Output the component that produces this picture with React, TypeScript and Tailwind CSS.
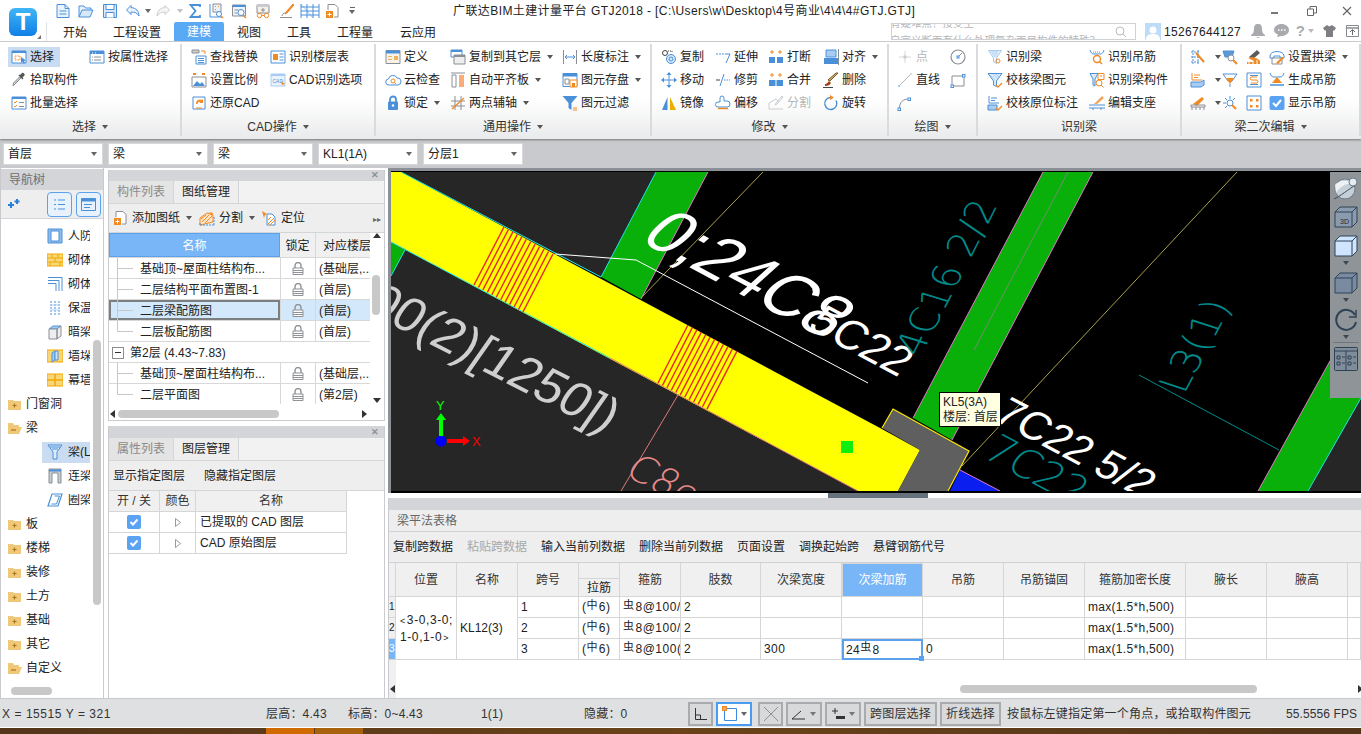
import React from "react";

const B = "#4a90d9", O = "#f08a24", G = "#8a8f96", L = "#a9cdf2", K = "#444";

const S = ({ s = 16, children }: { s?: number; children: React.ReactNode }) => (
  <svg width={s} height={s} viewBox="0 0 16 16" fill="none" strokeWidth="1" className="shrink-0">{children}</svg>
);
const Caret = ({ c = "border-t-[#555]" }: { c?: string }) => (
  <span className={`inline-block w-0 h-0 border-x-[3px] border-t-[4px] border-x-transparent ${c}`} />
);

const icons: Record<string, React.ReactNode> = {
  doc: <S><path d="M2 1.5h8l4 4v9H2z" fill="#eaf3fc" stroke={B} /><path d="M10 1.5v4h4M4.5 8h7M4.5 11h7" stroke={B} /></S>,
  open: <S><path d="M1 14V3h5l1.5 2H13v2" stroke={B} fill="#eaf3fc" /><path d="M1 14l3-7h11l-3 7z" stroke={B} fill="#d6e8fa" /></S>,
  save: <S><path d="M1.5 1.5h13v13h-13z" fill="#d6e8fa" stroke={B} /><path d="M4 1.5h8v5H4zM4 14.5v-5h8v5" stroke={B} fill="#fff" /></S>,
  undo: <S><path d="M6 2.5L1.5 7 6 11.5V9c4 0 6 1 8 4 0-5-3-8-8-8.5z" fill="#eaf3fc" stroke={B} /></S>,
  redo: <S><path d="M10 2.5L14.5 7 10 11.5V9c-4 0-6 1-8 4 0-5 3-8 8-8.5z" fill="#f6f6f6" stroke="#c9ccd0" /></S>,
  sum: <svg width="12" height="16" viewBox="0 0 12 16" fill="none" className="shrink-0"><path d="M11 4V2H1.5L6.5 8 1.5 14H11v-2" stroke={B} strokeWidth="1.8" /></svg>,
  qa1: <S><path d="M2 1v13h12" stroke={B} /><path d="M5 1h8v8H5z" stroke={G} fill="#eef3f8" /><path d="M7 3h1v1H7zM10 3h1v1h-1zM7 6h1v1H7z" fill={O} /><circle cx="11" cy="11" r="2.5" stroke={B} fill="#fff" /><path d="M13 13l2 2" stroke={O} strokeWidth="1.5" /></S>,
  qa2: <S><path d="M1.5 2h13v11h-13z" stroke={G} fill="#eef3f8" /><path d="M1.5 2h13v2h-13z" fill={B} /><path d="M3.5 7h4M3.5 10h3" stroke={G} /><circle cx="10" cy="9.5" r="3" stroke={B} fill="#fff" /><path d="M12 12l3 3" stroke={O} strokeWidth="1.5" /></S>,
  qa3: <S><path d="M2 2h12v8H2z" stroke={G} fill="#f5f0e8" /><path d="M2 2h12v2H2z" fill="#c9ccd0" /><path d="M8 5v4M6 7h4" stroke={G} /><circle cx="4.5" cy="12.5" r="2.2" stroke={O} /><circle cx="11.5" cy="12.5" r="2.2" stroke={O} /><path d="M6.7 12.5h2.6" stroke={O} /></S>,
  qa4: <S><path d="M14 1l1 1-7 8-2 1 1-2z" fill={O} stroke={O} /><path d="M1 14.5h12" stroke={G} /><path d="M3 13c0-2 2-3 3-3" stroke={G} /></S>,
  qa5: <svg width="20" height="16" viewBox="0 0 20 16" fill="none" className="shrink-0"><path d="M1 1v14M7 1v14M13 1v14M19 1v14M1 4h18M1 8h18M1 12h18" stroke={B} /><path d="M1 1l6 7M7 8l6 7" stroke={B} strokeWidth=".5" /></svg>,
  qa6: <S><path d="M3 7V1.5h7l3 3V14H9" stroke={G} fill="#fff" /><path d="M1 8h7v7H1z" fill={O} /><path d="M4.5 9.5v4M2.5 11.5h4" stroke="#fff" /></S>,
  sel: <S><path d="M1 2h14v12H1z" fill="#fff" stroke={B} /><path d="M1 2h14v2H1z" fill={B} /><path d="M4 7h5v4H4z" stroke={O} strokeDasharray="1.5 1" /><path d="M10 8l5 3.5-2 .5 1 2-1.5.5-1-2-1.5 1.5z" fill={B} /></S>,
  attr: <S><path d="M1 2h14v12H1z" fill="#fff" stroke={B} /><path d="M1 2h14v3H1z" fill={B} /><path d="M3 4h1M6 4h1" stroke="#fff" /><path d="M5 8h7M5 11h7M3 8h1M3 11h1" stroke={G} /></S>,
  pick: <S><path d="M10 6l-6 6-2 2 .5-3 6-6z" fill="#c9ccd0" stroke={G} /><path d="M9 3l1.5-1.5a1.5 1.5 0 012.5 0 1.5 1.5 0 010 2.5L11.5 5.5l1 1-1 1L7.5 3.5l1-1z" fill="#555" /></S>,
  batch: <S><path d="M1 2h14v12H1z" fill="#fff" stroke={B} /><path d="M1 2h14v2H1z" fill={B} /><path d="M3 7l1 1 2-2M3 11l1 1 2-2" stroke={O} /><path d="M8 7.5h5M8 11.5h5" stroke={G} /></S>,
  find: <S><path d="M1 1h7v3H1z" fill="#c9ccd0" stroke={G} /><path d="M10 2h4v3" stroke={O} /><path d="M5 7h10v8H5z" fill="#fff" stroke={B} /><path d="M7 9.5h6M7 11.5h6M7 13.5h6" stroke={B} /></S>,
  scale: <S><path d="M1 5h14v10H1z" fill="#fff" stroke={G} /><path d="M2 14l4-5 3 3 2-2 3 4z" fill={B} /><path d="M2 2h3M11 2h3" stroke={O} strokeWidth="2" /></S>,
  restore: <S><path d="M2 2h12v12H2z" stroke={B} fill="#fff" /><path d="M5 9a4 4 0 016-4l1-1v4H8l1.5-1.5a2.5 2.5 0 00-3 2.5" fill={O} /><path d="M5 13h6" stroke={O} /></S>,
  floor: <S><path d="M1 2h14v12H1z" stroke={B} fill="#fff" /><path d="M3 5h5v6H3z" fill={O} /><path d="M9.5 5h4M9.5 8h4M9.5 11h4" stroke={B} /></S>,
  cad: <S><path d="M1 2h14v12H1z" stroke={L} fill="#eaf3fc" /><path d="M1 2h14v2H1z" fill={L} /><text x="2.5" y="11" fontSize="5" fontFamily="Liberation Sans" fill={B}>CAD</text><path d="M11 9l4 3-3 1z" fill={O} /></S>,
  def: <S><path d="M1 1.5h14v13H1z" fill="#f7f3ea" stroke={G} /><path d="M1 1.5h14v3H1z" fill={B} /><path d="M3 7h4v1H3zM9 7h4v4H9zM3 10h4v1H3z" fill="#eab35c" /></S>,
  cloud: <svg width="17" height="16" viewBox="0 0 17 16" fill="none" className="shrink-0"><path d="M4 13a3 3 0 01-.5-6 4.5 4.5 0 018.5-1 3.5 3.5 0 011 7z" stroke={B} fill="#fff" /><circle cx="8" cy="9" r="2" stroke={O} /><path d="M9.5 10.5l1.5 1.5" stroke={O} /></svg>,
  lock: <S><path d="M5 7V4.5a3 3 0 016 0V7" stroke={B} strokeWidth="1.8" /><rect x="3" y="6.5" width="10" height="8.5" rx="1" fill={B} /><circle cx="8" cy="10.5" r="1.2" fill="#fff" /></S>,
  copyf: <S><path d="M1 1h11v7H1z" stroke={B} fill="#fff" /><path d="M1 1h11v2H1z" fill={B} /><path d="M4 6h11v9H4z" stroke={G} fill="#eee" /><path d="M4 6h11v2H4z" fill={G} /></S>,
  align: <S><path d="M1 1h14" stroke={G} /><path d="M2 3h4v12H2z" stroke={G} fill="#fff" /><path d="M9 3h5v12H9z" fill="#fbac76" /></S>,
  axis: <S><path d="M5 1v14M11 1v14M1 6h14M1 11h14" stroke={G} /><path d="M2 14L14 3" stroke={O} strokeWidth="1.4" /></S>,
  dim: <S><path d="M1.5 1v14M14.5 1v14" stroke={G} /><path d="M3 8h10M5 6L3 8l2 2M11 6l2 2-2 2" stroke={B} /></S>,
  disk: <S><path d="M1 1.5h14v13H1z" fill="#fff" stroke={B} /><path d="M1 1.5h14v3H1z" fill={B} /><path d="M3 7h4v5H3z" stroke={G} /><path d="M8 8h7v7H8z" fill="#fff" stroke={O} /><path d="M10 11h3v4h-3z" fill={O} /></S>,
  filter: <S><path d="M.5 1h15L9.5 8v7l-3-2V8z" fill={B} /><path d="M11 13h4M11 15h4" stroke={O} /></S>,
  copy: <S><circle cx="4" cy="4" r="2.5" stroke={K} /><circle cx="10" cy="10" r="4.5" stroke={B} fill="#d6e8fa" /><circle cx="10" cy="10" r="2" stroke={B} /><path d="M7 2h4v2" stroke={K} strokeDasharray="1 1" /></S>,
  extend: <S><path d="M1 5h8" stroke={B} strokeDasharray="2 1" /><path d="M10 5h5L11 14" stroke={B} /></S>,
  brk: <S><path d="M1 8h6v6H1zM9 8h6v6H9z" fill={B} /><path d="M4 1v4M2 3h4M12 1v4M10 3h4" stroke={O} /></S>,
  aln: <S><path d="M3 1h10v7H3z" fill={L} stroke={B} /><path d="M1 9h14v6H1z" fill={B} /><path d="M15.5 0v16" stroke={G} /></S>,
  move: <S><path d="M8 1v14M1 8h14" stroke={B} /><path d="M8 0l2.5 3h-5zM8 16l2.5-3h-5zM0 8l3-2.5v5zM16 8l-3-2.5v5z" fill={B} /></S>,
  trim: <S><path d="M1 8h4" stroke={K} /><path d="M5 14L9 2" stroke={B} /><path d="M9 8h6" stroke={B} strokeDasharray="1.5 1" /></S>,
  merge: <S><path d="M1 8h14v6H1z" fill={B} /><path d="M8 8v6" stroke="#fff" /><path d="M4 1v4M2 3h4M12 1v4M10 3h4" stroke={O} /></S>,
  del: <S><path d="M15 1L7 9l-2-1 8-7z" fill="#c9a96a" stroke="#7a5a2b" /><path d="M2 12c2 0 3-2 4-3l2 2c-1 2-3 3-6 3z" fill="#a33c12" /><path d="M0 15.5h10" stroke={K} /></S>,
  mirror: <S><path d="M6.5 2v13H1z" fill={B} /><path d="M9 2v13h6z" fill="#eab000" /></S>,
  offset: <S><path d="M5 7V3a2 2 0 014 0v3h3a3 3 0 010 6H3a2 2 0 010-5z" stroke={B} fill="#fff" /><path d="M3 13.5h10" stroke={O} strokeWidth="1.5" /></S>,
  split: <S><path d="M1 14h14M1 14V8l7-4 3 3" stroke="#c9ccd0" /><path d="M14 1l1 1-6 7-2 1 1-2z" stroke="#c9ccd0" /></S>,
  rotate: <S><path d="M7 2.5a6 6 0 106 3" stroke={B} strokeWidth="1.4" /><path d="M7 0v5l4-2.5z" fill={O} /></S>,
  point: <S><path d="M8 2v12M2 8h12" stroke="#d4d6d9" /><rect x="6.5" y="6.5" width="3" height="3" fill="#c8ccd0" /></S>,
  circle: <S><circle cx="8" cy="8" r="7" stroke={G} strokeWidth="1.2" /><rect x="7" y="7" width="2" height="2" stroke={B} /><path d="M9 7l3-3" stroke={G} /></S>,
  line: <S><path d="M2 14L14 2" stroke="#b4b8bd" /><rect x="1" y="13" width="2" height="2" fill={L} /><rect x="13" y="1" width="2" height="2" fill="#d9dbde" /></S>,
  rect: <S><path d="M2 4h12v10H2z" stroke={G} /><rect x="1" y="13" width="2.5" height="2.5" fill="#fff" stroke={B} /><rect x="12.5" y="2.5" width="2.5" height="2.5" fill="#fff" stroke={B} /></S>,
  arc: <S><path d="M2.5 13c0-6 4-9 9-9" stroke={G} /><rect x="1" y="13" width="2.5" height="2.5" fill="#fff" stroke={B} /><rect x="11" y="3" width="2.5" height="2.5" fill="#fff" stroke={B} /></S>,
  rb: <S><path d="M1.5 1.5h13L9.5 9v5.5L6.5 13V9z" fill="#eef3f8" stroke={L} /><path d="M3.5 3h8M5 5h6M6.5 7h3" stroke={L} /><circle cx="11" cy="12" r="2" stroke={O} /></S>,
  rh: <S><path d="M1 1c1 3 2 4 4 4h6c2 0 3-1 4-4" stroke={B} /><path d="M4 3h8" stroke={G} strokeDasharray="1 1" /><circle cx="8" cy="10" r="3.5" stroke={O} strokeWidth="1.4" /><path d="M10.5 12.5l2.5 2.5" stroke={O} strokeWidth="1.4" /></S>,
  ck: <S><path d="M1 1.5h14L9.5 9v5.5L6.5 13V9z" fill="#dcebfa" stroke={B} /><path d="M3 3l5 5M6 2l5 5M9 2l3 3" stroke={L} /><path d="M9 13l2 2 4-4" stroke={O} strokeWidth="1.3" /></S>,
  rk: <S><path d="M1 1.5h8L6 7v7L4 13V7z" fill="#dcebfa" stroke={B} /><path d="M9 1.5h6v6H9z" fill="#fff" stroke={O} /><path d="M11 4h2" stroke={O} /><circle cx="10" cy="11" r="3" stroke={O} /><path d="M12 13l2.5 2.5" stroke={O} /></S>,
  cy: <S><path d="M2 1v7h10" stroke={B} /><path d="M4 3h6M4 5.5h4" stroke={B} /><path d="M1 10h9v5H1z" fill={L} stroke={B} /><path d="M9 13l2 2 4-4" stroke={O} strokeWidth="1.3" /></S>,
  edit: <S><path d="M5 9l8-8 2 2-7 6z" fill="#f6a45c" /><path d="M0 10h16M0 13h16" stroke={B} /><path d="M4 13v2M12 13v2" stroke={B} /></S>,
  s1: <S><path d="M1 3h9M1 8h9M1 13h9M3 1v14M8 1v14" stroke={B} strokeDasharray="2 1" /><path d="M6 4l8 9" stroke={O} strokeWidth="2" /></S>,
  s2: <S><path d="M1 2h11l-2 6H3z" fill="#5a9ad8" stroke={B} /><circle cx="9" cy="9" r="3" fill="#fff" stroke={G} /><path d="M11 11l4 4" stroke={O} strokeWidth="2" /></S>,
  s3: <S><path d="M3 8l8-7 3 3-7 6z" fill="#5c5c5c" /><path d="M2 9l6 3-1 1H1v2h13V12l-2-2-5-2z" fill={O} /><path d="M3 15V11M7 15v-3M11 15v-4" stroke="#fff" /></S>,
  s4: <S><path d="M1 7c0-6 14-6 14 0v2h-4V7H5v2H1z" stroke={B} fill="#fff" /><path d="M3 9h10v6H3z" stroke={G} fill="#fff" /><path d="M7 14l6-6 2 1-6 6z" fill={O} /></S>,
  s5: <S><path d="M2 1v7h10" stroke={O} /><path d="M4 3h6M4 5.5h4" stroke={O} /><path d="M1 10h10l3-2v5l-3 2H1z" fill={L} stroke={B} /></S>,
  s6: <S><path d="M1 2h14l-5 7H6z" stroke={B} fill="#fff" /><path d="M4 6h8l-4 6z" fill={O} /><path d="M8 12v3" stroke={B} /></S>,
  s7: <S><path d="M1 1h14v14H1z" stroke={B} fill="#fff" /><path d="M11 5H5a2 2 0 000 3h6a2 2 0 010 3H5" stroke={O} /><path d="M4 3.5h8M4 12.5h8" stroke={B} /></S>,
  s8: <S><path d="M1 1c1 3 2 4 4 4h6c2 0 3-1 4-4" stroke={B} /><path d="M8 5l5 6H3z" fill={O} /><path d="M1 13h14" stroke={B} strokeWidth="1.5" /></S>,
  s9: <S><path d="M3 9l9-7 2 2-7 7z" fill={O} /><path d="M1 10h14v2H1zM2 12v3M6 12v3M10 12v3M14 12v3" stroke={G} /></S>,
  s10: <S><path d="M8 1v3M1 8h3M3 3l2 2M13 3l-2 2M3 13l2-2" stroke={B} /><circle cx="8" cy="8" r="3" stroke={B} fill="#fff" /><path d="M10 10l4 4" stroke={O} strokeWidth="2" /></S>,
  s11: <S><path d="M1 1h14v14H1z" stroke={B} fill="#fff" /><path d="M4 4h2.5v2.5H4zM10 4h2.5v2.5H10zM4 10h2.5v2.5H4zM10 10h2.5v2.5H10z" fill={O} /></S>,
  s12: <S><rect x=".5" y="1" width="15" height="14" rx="2" fill="#5aa2f2" /><path d="M4 8l3 3 5-6" stroke="#fff" strokeWidth="2" /></S>,
  tb2: <S><path d="M1 15V8l7-5 6 2v7z" fill="#fde3c8" stroke={O} /><path d="M3 12l7-7M6 13l7-7M2 9l5-4" stroke={O} /><path d="M1 15h14M1 15V13M15 15v-9" stroke={B} strokeDasharray="2 1" /><path d="M10 2l4 1-1 3z" fill={O} /></S>,
  tb3: <S><path d="M6 4h5l3 3v8H6z" fill="#fff" stroke={B} /><path d="M7 14l6-6M9 15l5-5M7 10l3-3" stroke={O} /><path d="M1 1l5 3-2 1-1 3z" fill={O} /></S>,
  rf: <S><path d="M1 1h14v14H1z" fill="#8fbce8" stroke={B} /><path d="M4 3h8v10H4z" fill="#fff" stroke={B} /></S>,
  qt: <S><path d="M0 2h16v12H0z" fill="#f7d67a" stroke="#f0a800" /><path d="M0 6h16M0 10h16M5 2v4M11 2v4M8 6v4M3 10v4M13 10v4" stroke="#f0a800" /></S>,
  qt2: <S><path d="M1 1.5h14V15M1 4.5h11V15M1 7.5h8V15" stroke={B} /></S>,
  bw: <S><path d="M4 1v14M8 1v14M12 1v14" stroke={B} strokeDasharray="2 1" /><path d="M4 5h8M4 10h8" stroke={L} /></S>,
  al: <S><path d="M2 5l4-3h8L10 5z" fill={L} stroke={B} /><path d="M2 5h8v10H2zM10 5l4-3v10l-4 3z" fill="#eee" stroke={G} /></S>,
  qd: <S><path d="M0 2h16v12H0z" fill="#f7d67a" stroke="#f0a800" /><path d="M5 5l3-2v9l-3 2z" fill={L} stroke={B} /><path d="M8 3h3v9H8z" fill="#cfe3f7" stroke={B} /></S>,
  mq: <S><path d="M0 2h16v12H0z" fill="#f7d67a" stroke="#f0a800" /><path d="M0 8h16M8 2v12" stroke="#f0a800" strokeWidth="1.5" /></S>,
  l: <S><path d="M1 1h14L10 8v7H6V8z" fill="#dcebfa" stroke={B} /><path d="M3 3h10M5 5h6" stroke={B} /></S>,
  ll: <S><path d="M2 1h12v14h-3V5H5v10H2z" fill="#c9ccd0" stroke={G} /><path d="M2 2.5h12" stroke={B} strokeWidth="2" /></S>,
  ql: <S><path d="M5 2h10L11 14H1z" fill="#fff" stroke={B} strokeWidth="1.2" /><path d="M7.5 4h5l-3 8H4.5" stroke={B} /></S>,
};

type It = { i: string; t?: string; c?: boolean; g?: boolean };
const Item = ({ i, t, c, g }: It) => (
  <div className="flex items-center h-[23px] whitespace-nowrap">
    <span className="w-[19px] shrink-0 flex">{icons[i]}</span>
    {t && <span className={g ? "text-[#b4b6b9]" : ""}>{t}</span>}
    {c && <span className="ml-[6px] flex"><Caret /></span>}
  </div>
);

const Group = ({ w, pl, label, caret = true, cols }: { w: string; pl: string; label: string; caret?: boolean; cols: [string, It[]][] }) => (
  <section className={`${w} shrink-0 h-[92px] mt-[2px] border-r-2 border-[#d9dbde] flex flex-col`}>
    <div className={`flex ${pl} pt-[1px] h-[72px]`}>
      {cols.map(([cw, items], n) => (
        <div key={n} className={cw}>
          {items.map((it, m) => <Item key={m} {...it} />)}
        </div>
      ))}
    </div>
    <div className="h-[20px] pt-[2px] flex items-center justify-center gap-[6px] text-[#333]">
      {label}{caret && <Caret />}
    </div>
  </section>
);

const Tree = ({ i, t, folder, open, sel }: { i?: string; t: string; folder?: boolean; open?: boolean; sel?: boolean }) => (
  <div className={`h-[24px] flex items-center whitespace-nowrap overflow-hidden ${folder ? "pl-[6px]" : "pl-[46px]"}`}>
    {folder ? (
      <>
        <svg width="15" height="13" viewBox="0 0 15 13" className="shrink-0 mr-[4px]">
          {open ? <path d="M1 12V1h5l1 2h5v2H4L1 12zm0 0h11l3-7H4z" fill="#f1c879" /> : <path d="M1 12V2h5l1 1h7v9z" fill="#f1c879" />}
          <path d={open ? "M4 8h5" : "M7.5 5.5v4M5.5 7.5h4"} stroke="#a9781f" strokeWidth="1.2" />
        </svg>
        <span>{t}</span>
      </>
    ) : (
      <div className={`flex items-center h-[21px] w-[48px] -ml-[5px] pl-[5px] ${sel ? "bg-[#c9dcf1]" : ""}`}>
        <span className="w-[16px] shrink-0 mr-[5px] flex">{icons[i!]}</span>
        <span className="overflow-hidden">{t}</span>
      </div>
    )}
  </div>
);

const Close = ({ h = "h-[11px]" }: { h?: string }) => (
  <div className={`${h} shrink-0 bg-[#d3d5d9] flex items-center justify-end pr-[5px]`}>
    <span className="text-[#8c8f94] text-[9px] leading-none font-bold">✕</span>
  </div>
);

const Tabs = ({ a, b }: { a: string; b: string }) => (
  <div className="h-[23px] shrink-0 flex bg-[#f2f2f2] border-b border-[#d3d5d9]">
    <div className="w-[65px] border-r border-[#d3d5d9] bg-[#e4e4e4] text-[#8b8b8b] flex items-center justify-center">{a}</div>
    <div className="w-[65px] border-r border-[#d3d5d9] bg-[#eeeeee] flex items-center justify-center">{b}</div>
  </div>
);

const Lock = () => (
  <svg width="12" height="13" viewBox="0 0 12 13" fill="none">
    <path d="M3 6V3.5a3 3 0 016 0V6" stroke="#8f9296" strokeWidth="1.4" />
    <path d="M1 6h10v6.5H1z" fill="#fff" stroke="#8f9296" />
    <path d="M1 8.5h10M1 10.5h10" stroke="#8f9296" />
  </svg>
);

const DrawRow = ({ name, floor, sel, last }: { name: string; floor: string; sel?: boolean; last?: boolean }) => (
  <div className="h-[21px] shrink-0 flex border-b border-[#d8d8d8]">
    <div className={`w-[171px] shrink-0 flex items-center relative whitespace-nowrap pl-[31px] pt-[1px] ${sel ? "bg-[#d4e8fb] outline-2 -outline-offset-2 outline-[#7c7f82] z-10" : ""}`}>
      <svg width="24" height="21" viewBox="0 0 24 21" fill="none" className="absolute left-[8px] top-0">
        <path d={last ? "M.5 0v10.5H16" : "M.5 0v21M.5 10.5H16"} stroke="#c8c8c8" />
      </svg>
      {name}
    </div>
    <div className={`w-[36px] shrink-0 flex items-center justify-center border-x border-[#d8d8d8] pt-[1px] ${sel ? "bg-[#d4e8fb]" : ""}`}><Lock /></div>
    <div className={`flex-1 pl-[3px] pt-[1px] flex items-center whitespace-nowrap overflow-hidden ${sel ? "bg-[#d4e8fb]" : ""}`}>{floor}</div>
  </div>
);

const Arrow = ({ d }: { d: "u" | "d" | "l" | "r" }) => {
  const p = { u: "M0 5L4 0l4 5z", d: "M0 0l4 5 4-5z", l: "M5 0L0 4l5 4z", r: "M0 0l5 4-5 4z" }[d];
  return <svg width="8" height="8" viewBox="0 0 8 8"><path d={p} fill="#333" /></svg>;
};

const TH = ({ t, a, cls = "" }: { t?: string; a?: boolean; cls?: string }) => (
  <div className={`border-r border-b border-[#d6d6d6] flex items-center justify-center ${a ? "bg-[#79b6f7] text-white" : "bg-[#f0f0f0] text-[#333]"} ${cls}`}>{t}</div>
);
const TD = ({ t, cls = "" }: { t?: React.ReactNode; cls?: string }) => (
  <div className={`border-r border-b border-[#d6d6d6] flex items-center pl-[3px] whitespace-nowrap overflow-hidden bg-white ${cls}`}>{t}</div>
);

const Stir = ({ x, y, dx, dy, n, sx, sy }: { x: number; y: number; dx: number; dy: number; n: number; sx: number; sy: number }) => (
  <g stroke="#e8262a" strokeWidth="1.4">
    {Array.from({ length: n }).map((_, i) => (
      <line key={i} x1={x + i * sx} y1={y + i * sy} x2={x + i * sx + dx} y2={y + i * sy + dy} />
    ))}
  </g>
);

const Canvas = () => (
  <svg viewBox="391 172 970 319" width="970" height="319" className="block" style={{ fontFamily: "Liberation Sans" }}>
    <rect x="391" y="172" width="970" height="319" fill="#000" />
    <path d="M391 172h265L601 277zM391 242l467 249H391z" fill="#262626" />
    <path d="M1308 491l53-93v93z" fill="#262626" />
    <path d="M656 172h52l-67 127-40-22z" fill="#09b009" />
    <path d="M656 172l-55 105" stroke="#1fe6e6" />
    <path d="M708 172l-67 127" stroke="#e07ac8" />
    <path d="M391 242l14 8-14 26z" fill="#09b009" />
    <path d="M405 250l-14 26" stroke="#1fe6e6" />
    <path d="M763 172L641 298" stroke="#a8a04a" />
    <path d="M1043 172h50L952 440l-39-22z" fill="#09b009" />
    <path d="M1043 172L913 418M1093 172L952 440" stroke="#e07ac8" />
    <path d="M1068 172L974 350" stroke="#6f8f6f" />
    <path d="M1237 172L962 466" stroke="#a8a04a" />
    <path d="M1258 491l103-186v93l-53 93z" fill="#09b009" />
    <path d="M1258 491l103-186" stroke="#e07ac8" />
    <path d="M1308 491l53-93" stroke="#1fe6e6" />
    <path d="M960 470l40 21h-50z" fill="#0a1ef0" />
    <path d="M960 470l40 21" stroke="#e07ac8" />
    <path d="M621 491l57-96" stroke="#e07a7a" />
    <path d="M391 172h10l479 256 40 22-22 41h-40L391 242z" fill="#ffff00" />
    <path d="M401 172l200 105" stroke="#1fe6e6" />
    <path d="M391 242l219 116" stroke="#1fe6e6" />
    <path d="M610 358l248 133" stroke="#e07a7a" />
    <Stir x={504} y={227} dx={-30} dy={58} n={12} sx={4.45} sy={2.45} />
    <Stir x={688} y={325} dx={-30} dy={58} n={12} sx={4.45} sy={2.38} />
    <path d="M893 409l76 42-21 40h-50l22-41-38-22z" fill="#5f5f5f" />
    <path d="M882 428l11-19 76 42-21 40" stroke="#ffe600" strokeWidth="1.2" fill="none" />
    <rect x="841" y="441" width="12" height="12" fill="#0fef0f" />
    <path d="M555 254l81 6 232 123" stroke="#fff" fill="none" />

    <g fill="#fff">
      <text transform="translate(638 240) rotate(28) skewX(-20)" fontSize="66">0;24C8</text>
      <text transform="translate(806 328) rotate(28) skewX(-10)" fontSize="44">5C22</text>
      <text transform="translate(992 419) rotate(28) skewX(-10)" fontSize="42">7C22 5/2</text>
    </g>
    <text transform="translate(363 310) rotate(27) skewX(-8)" fontSize="50" fill="#cfcfcf">00(2)[1250])</text>
    <g fill="#008a8a" style={{ fontFamily: "DejaVu Sans", fontWeight: 200 }}>
      <text transform="translate(920 358) rotate(-63) skewX(10)" fontSize="38">4C16 2/2</text>
      <text transform="translate(1184 395) rotate(-62) skewX(10)" fontSize="39">L3(1)</text>
      <text transform="translate(981 456) rotate(28) skewX(-10)" fontSize="41">7C22 5/2</text>
    </g>
    <path d="M1139 375l140 75" stroke="#008a8a" />
    <text transform="translate(623 474) rotate(28) skewX(-10)" fontSize="38" fill="#e88a8a" style={{ fontFamily: "DejaVu Sans", fontWeight: 200 }}>C8e</text>

    <circle cx="441" cy="441" r="5.5" fill="#0000ff" />
    <path d="M439 436v-16h-3l5-7 5 7h-3v16z" fill="#00ff00" />
    <path d="M447 439h16v-3l7 5-7 5v-3h-16z" fill="#ff0000" />
    <text x="436" y="410" fontSize="13" fill="#00ff00">Y</text>
    <text x="472" y="446" fontSize="13" fill="#ff0000">X</text>
  </svg>
);

const VB = ({ children, arrow }: { children: React.ReactNode; arrow?: boolean }) => (
  <div className="w-[28px] flex flex-col items-center">
    {children}
    {arrow && <span className="my-[3px] flex"><Caret c="border-t-[#3c4650]" /></span>}
  </div>
);
const Cube = ({ front, label }: { front: string; label?: string }) => (
  <svg width="24" height="24" viewBox="0 0 24 24" fill="none">
    <path d="M1 7l5-5h17v15l-5 5H1z" fill={front} stroke="#2f4256" />
    <path d="M1 7h17v15M18 7l5-5" stroke="#2f4256" />
    {label && <text x="6" y="19" fontSize="7" fill="#1f2a36" fontFamily="Liberation Sans">{label}</text>}
  </svg>
);

const ToolRail = () => (
  <div className="absolute right-0 top-[1px] w-[31px] h-[226px] bg-[#8f9498] flex flex-col items-center pt-[5px]">
    <svg width="26" height="24" viewBox="0 0 26 24" className="mb-[4px]">
      <circle cx="12" cy="12" r="10" fill="#c5cfd8" stroke="#6d7a87" />
      <path d="M2 8c3-4 10-6 18-2-6 0-14 4-17 10z" fill="#eef2f5" />
      <path d="M1 22C6 20 16 12 24 7" stroke="#3d4a57" fill="none" />
      <circle cx="20" cy="5" r="4" fill="#e4ebf1" stroke="#6d7a87" />
    </svg>
    <VB><Cube front="#8a9bad" label="3D" /></VB>
    <div className="h-[5px]" />
    <VB arrow><Cube front="#cfe5ff" /></VB>
    <div className="h-[3px]" />
    <VB arrow><Cube front="#7a8aa0" /></VB>
    <VB arrow>
      <svg width="24" height="24" viewBox="0 0 24 24" fill="none" className="mt-[3px]">
        <path d="M21 7a10 10 0 10 1 7" stroke="#2f4256" strokeWidth="2" />
        <path d="M22 2v7h-7" stroke="#2f4256" strokeWidth="1.5" />
      </svg>
    </VB>
    <div className="w-[26px] border-t border-[#6f757b] mb-[4px]" />
    <svg width="24" height="24" viewBox="0 0 24 24" fill="none">
      <rect x=".5" y=".5" width="23" height="23" rx="1" fill="#7f8c9a" stroke="#2f4256" />
      <path d="M.5 4h23M12 4v20M3 9h3v3H3zM3 15h3v3H3zM14 9h3v3h-3zM14 15h3v3h-3zM8 10h3M8 16h3M19 10h3M19 16h3" stroke="#2f4256" />
    </svg>
  </div>
);

const Btn = ({ w, active, children }: { w: string; active?: boolean; children: React.ReactNode }) => (
  <div className={`${w} h-[24px] flex items-center justify-center gap-[4px] shrink-0 border-2 ${active ? "border-[#4a9cf0] bg-white" : "border-[#a9abae] bg-[#d8d9db]"}`}>{children}</div>
);

const hCols = "grid-cols-[7px_61px_61px_61px_41px_61px_80px_81px_81px_81px_81px_101px_81px_81px_13px]";
const Hl = ({ t }: { t: string }) => <span className="text-[11px] relative -top-[2px] mr-[1px]">{t}</span>;

export default function App() {
  return (
    <div className="w-[1361px] h-[734px] overflow-hidden flex flex-col bg-white text-[12px] leading-none text-[#222] font-['Liberation_Sans','Noto_Sans_CJK_SC',sans-serif]">
      {/* Title + tabs */}
      <header className="h-[42px] shrink-0 flex bg-white border-b border-[#cfd1d4]">
        <div className="w-[46px] shrink-0 relative pl-[9px] pt-[8px]">
          <div className="w-[28px] h-[28px] rounded-[6px] bg-gradient-to-b from-[#3fb6f5] to-[#0f7fe6] flex items-center justify-center text-white font-bold text-[24px]">T</div>
          <span className="absolute left-[37px] top-[35px] w-0 h-0 border-[2px] border-transparent border-b-[#777] border-r-[#777]" />
        </div>
        <div className="flex-1 min-w-0 flex flex-col">
          <div className="h-[21px] flex items-center">
            <div className="w-[407px] shrink-0 flex items-center">
              <span className="ml-[9px] flex">{icons.doc}</span>
              <span className="ml-[7px] flex">{icons.open}</span>
              <span className="ml-[8px] flex">{icons.save}</span>
              <span className="ml-[7px] flex">{icons.undo}</span>
              <span className="ml-[4px] flex"><Caret c="border-t-[#666]" /></span>
              <span className="ml-[4px] flex">{icons.redo}</span>
              <span className="ml-[6px] flex"><Caret c="border-t-[#c0c2c5]" /></span>
              <span className="ml-[6px] flex">{icons.sum}</span>
              <span className="ml-[7px] flex">{icons.qa1}</span>
              <span className="ml-[7px] flex">{icons.qa2}</span>
              <span className="ml-[8px] flex">{icons.qa3}</span>
              <span className="ml-[8px] flex">{icons.qa4}</span>
              <span className="ml-[5px] flex">{icons.qa5}</span>
              <span className="ml-[5px] flex">{icons.qa6}</span>
              <span className="ml-[8px] flex flex-col items-center gap-[2px]"><span className="w-[5px] border-t border-[#666]" /><Caret c="border-t-[#666]" /></span>
            </div>
            <div className="whitespace-nowrap w-[470px] shrink-0 tracking-[.41px]">广联达BIM土建计量平台 GTJ2018 - [C:\Users\w\Desktop\4号商业\4\4\4#GTJ.GTJ]</div>
            <div className="ml-[348px] flex items-center gap-[25px] shrink-0">
              <span className="w-[7px] border-t-2 border-[#777] mt-[4px]" />
              <svg width="10" height="10" viewBox="0 0 10 10" fill="none" className="ml-[4px]"><path d="M.5 3h6v6.5h-6zM3 3V.5h6.5V7H7" stroke="#666" /></svg>
              <svg width="10" height="10" viewBox="0 0 10 10" fill="none"><path d="M1 1l8 8M9 1L1 9" stroke="#666" strokeWidth="1.2" /></svg>
            </div>
          </div>
          <div className="h-[20px] flex items-end relative">
            <nav className="flex h-[19px] items-center pt-[2px] border-l border-[#e2e3e5]">
              <span className="ml-[16px] w-[50px]">开始</span>
              <span className="w-[61px]">工程设置</span>
              <span className="w-[50px] h-[19px] -mt-[2px] bg-[#5aa9f5] text-white flex items-center justify-center rounded-t-[2px]">建模</span>
              <span className="ml-[13px] w-[50px]">视图</span>
              <span className="w-[50px]">工具</span>
              <span className="w-[63px]">工程量</span>
              <span>云应用</span>
            </nav>
            <div className="ml-[455px] mb-[1px] w-[245px] h-[17px] border border-[#cfd1d4] overflow-hidden relative text-[#b5b7ba] shrink-0">
              <div className="absolute left-[-2px] top-[-6px] whitespace-nowrap text-[10.5px]">有疑难点？接受主</div>
              <div className="absolute left-[-2px] top-[11px] whitespace-nowrap text-[10.5px]">自定义断面有什么处理复杂面目构件的特殊？</div>
              <svg width="12" height="12" viewBox="0 0 12 12" fill="none" className="absolute right-[8px] top-[2px]"><circle cx="5" cy="5" r="4" stroke="#bbb" /><path d="M8 8l3 3" stroke="#bbb" /></svg>
            </div>
            <div className="ml-[9px] w-[16px] h-[17px] mb-[1px] bg-[#bcdcf8] flex items-end justify-center overflow-hidden shrink-0">
              <svg width="14" height="15" viewBox="0 0 14 15"><circle cx="7" cy="5" r="3.5" fill="#fff" /><path d="M0 15c0-5 3-6 7-6s7 1 7 6z" fill="#fff" /></svg>
            </div>
            <span className="ml-[3px] mb-[3px] tracking-[.32px]">15267644127</span>
            <div className="absolute right-0 bottom-[3px] flex items-center">
              <svg width="14" height="14" viewBox="0 0 14 14" className="mr-[9px]"><path d="M7 0c3 0 4 2 4 5s1 5 3 6v1H0v-1c2-1 3-3 3-6s1-5 4-5zM5 13h4l-2 1z" fill="#a8aaad" /></svg>
              <svg width="15" height="13" viewBox="0 0 15 13" className="mr-[7px]"><path d="M7.5 0C11.5 0 15 2.5 15 6s-3.5 6-7.5 6L3 13l1-2.5C1.5 9.5 0 8 0 6c0-3.5 3.5-6 7.5-6z" fill="#a8aaad" /><path d="M4 6h1.5M7 6h1.5M10 6h1.5" stroke="#fff" strokeWidth="1.5" /></svg>
              <span className="text-[#a8aaad] font-bold text-[15px] mr-[3px]">?</span>
              <span className="mr-[9px] flex"><Caret c="border-t-[#bbb]" /></span>
              <svg width="13" height="12" viewBox="0 0 13 12" className="mr-[10px]"><path d="M4 0L0 3l2 3 1-1v7h7V5l1 1 2-3-4-3-2.5 1.5z" fill="#7d7f82" /></svg>
              <svg width="13" height="12" viewBox="0 0 13 12" fill="none" className="mr-[2px]"><path d="M.5.5h12v11H.5z" stroke="#8a8c8f" /><path d="M.5 3h12" stroke="#8a8c8f" strokeWidth="1.5" /><path d="M6.5 10V5M4 7l2.5-2.5L9 7" stroke="#6a6c6f" /></svg>
            </div>
          </div>
        </div>
      </header>

      {/* Ribbon */}
      <div className="h-[97px] shrink-0 flex bg-gradient-to-b from-white from-60% to-[#e9eaeb] shadow-[0_1px_2px_#777] relative z-10">
        <section className="w-[182px] shrink-0 h-[92px] mt-[2px] border-r-2 border-[#d9dbde] flex flex-col">
          <div className="flex pl-[8px] pt-[1px] h-[72px]">
            <div className="w-[81px]">
              <div className="w-[52px] pl-[3px] bg-[#c9dcf1] -mb-px h-[20px] mt-[2px] flex items-center"><span className="w-[19px] flex">{icons.sel}</span>选择</div>
              <div className="pl-[3px] mt-[2px]"><Item i="pick" t="拾取构件" /></div>
              <div className="pl-[3px]"><Item i="batch" t="批量选择" /></div>
            </div>
            <div><Item i="attr" t="按属性选择" /></div>
          </div>
          <div className="h-[20px] pt-[2px] flex items-center justify-center gap-[6px] text-[#333]">选择<Caret /></div>
        </section>
        <Group w="w-[194px]" pl="pl-[9px]" label="CAD操作" cols={[
          ["w-[79px]", [{ i: "find", t: "查找替换" }, { i: "scale", t: "设置比例" }, { i: "restore", t: "还原CAD" }]],
          ["", [{ i: "floor", t: "识别楼层表" }, { i: "cad", t: "CAD识别选项" }]],
        ]} />
        <Group w="w-[276px]" pl="pl-[9px]" label="通用操作" cols={[
          ["w-[65px]", [{ i: "def", t: "定义" }, { i: "cloud", t: "云检查" }, { i: "lock", t: "锁定", c: true }]],
          ["w-[112px]", [{ i: "copyf", t: "复制到其它层", c: true }, { i: "align", t: "自动平齐板", c: true }, { i: "axis", t: "两点辅轴", c: true }]],
          ["", [{ i: "dim", t: "长度标注", c: true }, { i: "disk", t: "图元存盘", c: true }, { i: "filter", t: "图元过滤" }]],
        ]} />
        <Group w="w-[237px]" pl="pl-[9px]" label="修改" cols={[
          ["w-[54px]", [{ i: "copy", t: "复制" }, { i: "move", t: "移动" }, { i: "mirror", t: "镜像" }]],
          ["w-[53px]", [{ i: "extend", t: "延伸" }, { i: "trim", t: "修剪" }, { i: "offset", t: "偏移" }]],
          ["w-[55px]", [{ i: "brk", t: "打断" }, { i: "merge", t: "合并" }, { i: "split", t: "分割", g: true }]],
          ["", [{ i: "aln", t: "对齐", c: true }, { i: "del", t: "删除" }, { i: "rotate", t: "旋转" }]],
        ]} />
        <Group w="w-[89px]" pl="pl-[8px]" label="绘图" cols={[
          ["w-[53px]", [{ i: "point", t: "点", g: true }, { i: "line", t: "直线" }, { i: "arc" }]],
          ["", [{ i: "circle" }, { i: "rect" }]],
        ]} />
        <Group w="w-[204px]" pl="pl-[9px]" label="识别梁" caret={false} cols={[
          ["w-[102px]", [{ i: "rb", t: "识别梁" }, { i: "ck", t: "校核梁图元" }, { i: "cy", t: "校核原位标注" }]],
          ["", [{ i: "rh", t: "识别吊筋" }, { i: "rk", t: "识别梁构件" }, { i: "edit", t: "编辑支座" }]],
        ]} />
        <Group w="flex-1" pl="pl-[8px]" label="梁二次编辑" cols={[
          ["w-[32px]", [{ i: "s1", c: true }, { i: "s5", c: true }, { i: "s9", c: true }]],
          ["w-[24px]", [{ i: "s2" }, { i: "s6" }, { i: "s10" }]],
          ["w-[23px]", [{ i: "s3" }, { i: "s7" }, { i: "s11" }]],
          ["", [{ i: "s4", t: "设置拱梁", c: true }, { i: "s8", t: "生成吊筋" }, { i: "s12", t: "显示吊筋" }]],
        ]} />
      </div>

      {/* Combo row */}
      <div className="h-[29px] shrink-0 bg-[#c8cacd] flex items-center pl-[3px] gap-[5px]">
        {["首层", "梁", "梁", "KL1(1A)", "分层1"].map((t, i) => (
          <div key={i} className="h-[22px] w-[100px] bg-white border border-[#d8d9db] flex items-center justify-between pl-[4px] pr-[5px]">
            <span>{t}</span><Caret c="border-t-[#666]" />
          </div>
        ))}
      </div>

      {/* Main */}
      <main className="flex-1 min-h-0 flex bg-[#f3f3f3]">
        {/* Navigation */}
        <aside className="w-[104px] shrink-0 bg-white border-r border-l border-[#c8cacd] flex flex-col">
          <div className="h-[20px] mt-[1px] pt-[2px] bg-[#d3d5d9] flex items-center pl-[8px] text-[#6d6f72]">导航树</div>
          <div className="h-[30px] bg-[#eeeeee] border-y border-[#d3d5d9] flex items-center pl-[6px]">
            <svg width="14" height="10" viewBox="0 0 14 10" className="mr-[26px]"><path d="M4 3v6M1 6h6M10 0v5M7.5 2.5h5" stroke="#2a7fd8" strokeWidth="2" /></svg>
            <div className="w-[25px] h-[25px] rounded-[4px] border border-[#5aa2ee] bg-[#e8f2fc] flex items-center justify-center mr-[4px]">
              <svg width="13" height="13" viewBox="0 0 13 13" fill="none"><path d="M1 2h2M5 2h7M1 6.5h2M5 6.5h7M1 11h2M5 11h7" stroke="#4a90d9" /></svg>
            </div>
            <div className="w-[25px] h-[25px] rounded-[4px] border border-[#5aa2ee] bg-[#e8f2fc] flex items-center justify-center">
              <svg width="15" height="13" viewBox="0 0 15 13" fill="none"><path d="M.5.5h14v12H.5z" stroke="#4a90d9" /><path d="M.5.5h14v3H.5z" fill="#4a90d9" /><path d="M3 6.5h8M3 9.5h6" stroke="#4a90d9" /></svg>
            </div>
          </div>
          <div className="flex-1 min-h-0 relative pt-[5px] overflow-hidden">
            <div className="w-[89px]">
              <Tree i="rf" t="人防" />
              <Tree i="qt" t="砌体" />
              <Tree i="qt2" t="砌体" />
              <Tree i="bw" t="保温" />
              <Tree i="al" t="暗梁" />
              <Tree i="qd" t="墙垛" />
              <Tree i="mq" t="幕墙" />
              <Tree folder t="门窗洞" />
              <Tree folder open t="梁" />
              <Tree i="l" t="梁(L" sel />
              <Tree i="ll" t="连梁" />
              <Tree i="ql" t="圈梁" />
              <Tree folder t="板" />
              <Tree folder t="楼梯" />
              <Tree folder t="装修" />
              <Tree folder t="土方" />
              <Tree folder t="基础" />
              <Tree folder t="其它" />
              <Tree folder open t="自定义" />
            </div>
            <div className="absolute left-[92px] top-[121px] w-[8px] h-[265px] rounded-full bg-[#c8c8c8]" />
            <div className="absolute left-[10px] bottom-[3px] w-[41px] h-[8px] rounded-full bg-[#c8c8c8]" />
          </div>
        </aside>
        <div className="w-[4px] shrink-0 bg-white" />

        {/* Middle */}
        <div className="w-[277px] shrink-0 flex flex-col gap-[5px] pt-[2px] bg-white">
          <section className="h-[251px] shrink-0 border-x border-b border-[#c9cbce] flex flex-col bg-white">
            <Close />
            <Tabs a="构件列表" b="图纸管理" />
            <div className="h-[29px] shrink-0 bg-[#eeeeee] border-b border-[#d3d5d9] flex items-center pl-[4px] relative">
              {icons.qa6}<span className="ml-[3px]">添加图纸</span><span className="ml-[6px] mr-[7px] flex"><Caret /></span>
              {icons.tb2}<span className="ml-[4px]">分割</span><span className="ml-[6px] mr-[6px] flex"><Caret /></span>
              {icons.tb3}<span className="ml-[4px]">定位</span>
              <span className="absolute right-[3px] top-[12px] text-[8px] text-[#666]">▸▸</span>
            </div>
            <div className="flex-1 min-h-0 flex overflow-hidden">
              <div className="w-[261px] shrink-0 flex flex-col">
                <div className="h-[25px] shrink-0 flex border-b border-[#d8d8d8]">
                  <div className="w-[171px] bg-[#79b6f7] text-white flex items-center justify-center border border-[#5aa2ee] pt-[1px]">名称</div>
                  <div className="w-[36px] bg-[#f0f0f0] flex items-center justify-center border-r border-[#d8d8d8] pt-[1px]">锁定</div>
                  <div className="flex-1 bg-[#f0f0f0] flex items-center pl-[7px] pt-[1px] whitespace-nowrap overflow-hidden">对应楼层</div>
                </div>
                <DrawRow name="基础顶~屋面柱结构布..." floor="(基础层,..." />
                <DrawRow name="二层结构平面布置图-1" floor="(首层)" />
                <DrawRow name="二层梁配筋图" floor="(首层)" sel />
                <DrawRow name="二层板配筋图" floor="(首层)" last />
                <div className="h-[21px] shrink-0 flex items-center border-b border-[#d8d8d8] pl-[3px] pt-[1px]">
                  <span className="w-[12px] h-[12px] border border-[#8a8c8f] flex items-center justify-center mr-[6px]"><span className="w-[6px] border-t border-[#333]" /></span>
                  第2层 (4.43~7.83)
                </div>
                <DrawRow name="基础顶~屋面柱结构布..." floor="(基础层,..." />
                <DrawRow name="二层平面图" floor="(第2层)" last />
              </div>
              <div className="flex-1 relative">
                <span className="absolute left-[3px] top-[0px] flex"><Arrow d="u" /></span>
                <div className="absolute left-[2px] top-[42px] w-[8px] h-[40px] rounded-full bg-[#c8c8c8]" />
                <span className="absolute left-[3px] top-[165px] flex"><Arrow d="d" /></span>
              </div>
            </div>
            <div className="h-[16px] relative bg-white shrink-0 -mt-[16px] z-10">
              <span className="absolute left-[1px] top-[6px] flex"><Arrow d="l" /></span>
              <div className="absolute left-[9px] top-[6px] w-[161px] h-[8px] rounded-full bg-[#c8c8c8]" />
              <span className="absolute left-[253px] top-[6px] flex"><Arrow d="r" /></span>
            </div>
          </section>

          <section className="flex-1 min-h-0 border-x border-[#c9cbce] flex flex-col bg-white">
            <Close h="h-[12px]" />
            <Tabs a="属性列表" b="图层管理" />
            <div className="h-[30px] shrink-0 bg-[#eeeeee] border-b border-[#d3d5d9] flex items-center pl-[4px] gap-[16px]">
              <span>显示指定图层</span><span className="ml-[3px]">隐藏指定图层</span>
            </div>
            <div className="grid grid-cols-[51px_36px_151px] auto-rows-[21px] w-[238px]">
              {["开 / 关", "颜色", "名称"].map((t) => (
                <div key={t} className="bg-[#f0f0f0] border-r border-b border-[#d6d6d6] flex items-center justify-center text-[#333]">{t}</div>
              ))}
              {["已提取的 CAD 图层", "CAD 原始图层"].map((t) => (
                <React.Fragment key={t}>
                  <div className="border-r border-b border-[#d6d6d6] flex items-center justify-center"><svg width="14" height="14" viewBox="0 0 14 14"><rect width="14" height="14" rx="2" fill="#5aa2f2" /><path d="M3.5 7l2.5 2.5 4.5-5" stroke="#fff" strokeWidth="2" fill="none" /></svg></div>
                  <div className="border-r border-b border-[#d6d6d6] flex items-center justify-center"><svg width="6" height="9" viewBox="0 0 6 9" fill="none"><path d="M.5.5l5 4-5 4z" stroke="#999" /></svg></div>
                  <div className="border-r border-b border-[#d6d6d6] flex items-center pl-[4px]">{t}</div>
                </React.Fragment>
              ))}
            </div>
          </section>
        </div>
        <div className="w-[3px] shrink-0 bg-white" />

        {/* Right */}
        <div className="flex-1 min-w-0 flex flex-col bg-white">
          <div className="relative h-[325px] shrink-0 bg-black overflow-hidden border-t-[3px] border-l-[3px] border-[#8a9096] pt-[1px]">
            <Canvas />
            <ToolRail />
            <div className="absolute left-[548px] top-[221px] w-[62px] h-[35px] bg-[#ffffe1] border border-black px-[3px] py-[3px] flex flex-col justify-between whitespace-nowrap">
              <span>KL5(3A)</span><span>楼层: 首层</span>
            </div>
          </div>
          <div className="h-[5px] shrink-0 pl-[440px]"><div className="w-[100px] h-full bg-[#67717b]" /></div>

          <section className="flex-1 min-h-0 flex flex-col border-l border-[#c9cbce] overflow-hidden">
            <div className="h-[12px] shrink-0 bg-[#d3d5d9]" />
            <div className="h-[22px] shrink-0 bg-[#eeeeee] border-b border-[#cfd1d4] flex items-center pl-[8px] text-[#666]">梁平法表格</div>
            <div className="h-[30px] shrink-0 bg-[#eeeeee] flex items-center pl-[4px] gap-[14px] whitespace-nowrap">
              <span>复制跨数据</span><span className="text-[#a8a8a8]">粘贴跨数据</span><span>输入当前列数据</span><span>删除当前列数据</span><span>页面设置</span><span>调换起始跨</span><span>悬臂钢筋代号</span>
            </div>
            <div className={`grid ${hCols} grid-rows-[34px_21px_21px_21px] border-t border-[#cfd1d4] shrink-0`}>
              <div className="bg-[#f0f0f0] border-r border-b border-[#d6d6d6]" />
              <TH t="位置" /><TH t="名称" /><TH t="跨号" />
              <div className="flex flex-col border-r border-b border-[#d6d6d6] bg-[#f0f0f0]">
                <div className="h-[16px] border-b border-[#d6d6d6]" />
                <div className="flex-1 flex items-center justify-center">拉筋</div>
              </div>
              <TH t="箍筋" /><TH t="肢数" /><TH t="次梁宽度" />
              <TH t="次梁加筋" a cls="border border-[#5aa2ee]" />
              <TH t="吊筋" /><TH t="吊筋锚固" /><TH t="箍筋加密长度" /><TH t="腋长" /><TH t="腋高" /><TH />

              <div className="row-start-2 col-start-2 row-span-3 border-r border-b border-[#d6d6d6] flex flex-col justify-center pl-[4px] gap-[5px] whitespace-nowrap bg-white">
                <span className="tracking-[.6px]"><span className="text-[9px] mr-[1px]">&lt;</span>3-0,3-0;</span><span className="tracking-[.6px]">1-0,1-0<span className="text-[9px] ml-[1px]">&gt;</span></span>
              </div>
              <div className="row-start-2 col-start-3 row-span-3 border-r border-b border-[#d6d6d6] flex items-center pl-[3px] bg-white">KL12(3)</div>

              <div className="row-start-2 col-start-1 border-b border-r border-[#d6d6d6] bg-[#f0f0f0] text-[10px] flex items-center overflow-hidden">1</div>
              <div className="row-start-3 col-start-1 border-b border-r border-[#d6d6d6] bg-[#f0f0f0] text-[10px] flex items-center overflow-hidden">2</div>
              <div className="row-start-4 col-start-1 border-b border-r border-[#d6d6d6] bg-[#79b6f7] text-white text-[10px] flex items-center overflow-hidden">3</div>

              {[1, 2, 3].map((n) => {
                const rowCls = n === 1 ? "row-start-2" : n === 2 ? "row-start-3" : "row-start-4";
                const act = n === 3;
                return (
                  <div key={n} className={`${rowCls} col-start-4 col-end-16 grid grid-cols-[61px_41px_61px_80px_81px_81px_81px_81px_101px_81px_81px_13px]`}>
                    <TD t={n} />
                    <TD t={<span className="tracking-[.4px]">(<Hl t="中" />6)</span>} />
                    <TD t={<span className="tracking-[.5px]"><Hl t="虫" />{act ? "8@100(" : "8@100/"}</span>} />
                    <TD t="2" />
                    <TD t={act ? <span className="tracking-[.4px]">300</span> : undefined} />
                    {act ? (
                      <div className="relative border-2 border-[#5aa2ee] bg-white flex items-center pl-[2px] whitespace-nowrap tracking-[.4px]">
                        24<Hl t="虫" />8
                        <span className="absolute -right-[3px] -bottom-[3px] w-[5px] h-[5px] bg-[#5aa2ee]" />
                      </div>
                    ) : <TD />}
                    <TD t={act ? "0" : undefined} />
                    <TD />
                    <TD t={<span className="tracking-[.3px]">max(1.5*h,500)</span>} />
                    <TD /><TD /><TD />
                  </div>
                );
              })}
            </div>
            <div className="flex-1 min-h-0 relative">
              <div className="absolute left-0 top-0 bottom-0 w-[7px] bg-[#f0f0f0]" />
              <span className="absolute left-[1px] top-[25px] flex"><Arrow d="l" /></span>
              <div className="absolute left-[571px] top-[25px] w-[297px] h-[8px] rounded-full bg-[#c8c8c8]" />
              <span className="absolute left-[969px] top-[25px] flex"><Arrow d="r" /></span>
            </div>
          </section>
        </div>
      </main>

      {/* Status bar */}
      <footer className="h-[29px] shrink-0 bg-[#dfe0e2] border-t border-[#c8cacd] pt-[1px] flex items-center whitespace-nowrap text-[#333] tracking-[.2px]">
        <span className="ml-[2px] w-[264px] tracking-[.55px]">X = 15515 Y = 321</span>
        <span className="w-[82px]">层高：4.43</span>
        <span className="w-[133px]">标高：0~4.43</span>
        <span className="w-[103px]">1(1)</span>
        <span className="w-[104px]">隐藏：0</span>
        <Btn w="w-[25px]"><svg width="14" height="14" viewBox="0 0 14 14" fill="none"><path d="M1.5 1v11.5H13M1.5 8h5v4.5" stroke="#333" /></svg></Btn>
        <span className="w-[3px]" />
        <Btn w="w-[36px]" active><span className="relative flex"><svg width="15" height="15" viewBox="0 0 15 15" fill="none"><path d="M2.5 2.5h12v12h-12z" stroke="#3d8be0" /><rect x=".5" y=".5" width="4" height="4" fill="#f4a860" stroke="#f08a24" /></svg></span><Caret c="border-t-[#666]" /></Btn>
        <span className="w-[6px]" />
        <Btn w="w-[25px]"><svg width="14" height="14" viewBox="0 0 14 14"><path d="M0 0l14 14M14 0L0 14" stroke="#8d8f92" /></svg></Btn>
        <span className="w-[3px]" />
        <Btn w="w-[36px]"><svg width="14" height="12" viewBox="0 0 14 12" fill="none"><path d="M0 11h13M0 11l9-8" stroke="#333" /></svg><Caret c="border-t-[#777]" /></Btn>
        <span className="w-[3px]" />
        <Btn w="w-[36px]"><svg width="14" height="12" viewBox="0 0 14 12" fill="none"><path d="M4 0v6M1 3h6" stroke="#333" /><path d="M5 8h9v3H5z" fill="#333" /></svg><Caret c="border-t-[#777]" /></Btn>
        <span className="w-[3px]" />
        <Btn w="w-[73px]">跨图层选择</Btn>
        <span className="w-[3px]" />
        <Btn w="w-[61px]">折线选择</Btn>
        <span className="ml-[6px] w-[279px]">按鼠标左键指定第一个角点，或拾取构件图元</span>
        <span className="tracking-[.1px]">55.5556 FPS</span>
      </footer>
      <div className="h-[1px] shrink-0 bg-white" />
      <div className="h-[6px] shrink-0 bg-gradient-to-r from-[#54351a] via-[#6a4318] to-[#54351a] flex">
        <div className="ml-[266px] w-[48px] bg-[#d06a00]" />
        <div className="ml-[1px] w-[48px] bg-[#a8610c]" />
      </div>
    </div>
  );
}
